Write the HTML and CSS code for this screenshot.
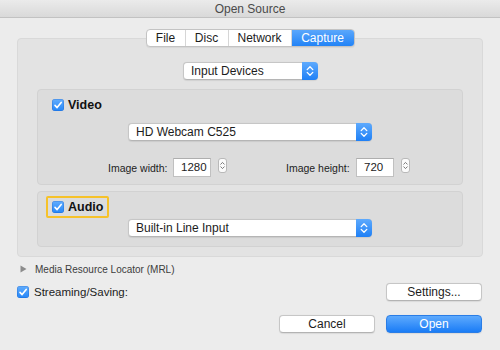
FILE: index.html
```html
<!DOCTYPE html>
<html>
<head>
<meta charset="utf-8">
<link rel="stylesheet" href="styles.css">
</head>
<body>
<div class="window">
  <div class="titlebar">Open Source</div>
  <div class="content">
    <div class="tabs">
      <div class="tab tab-file">File</div>
      <div class="tab tab-disc">Disc</div>
      <div class="tab tab-network">Network</div>
      <div class="tab tab-capture selected">Capture</div>
    </div>
    <div class="panel">
      <div class="popup popup-mode">
        <span class="popup-label">Input Devices</span>
        <span class="popup-arrows"><svg width="16" height="16" viewBox="0 0 16 16"><path d="M5.2 6.6 L8 3.8 L10.8 6.6 M5.2 9.4 L8 12.2 L10.8 9.4" fill="none" stroke="#fff" stroke-width="1.3" stroke-linecap="round" stroke-linejoin="round"/></svg></span>
      </div>
      <div class="group group-video">
        <div class="group-head">
          <span class="check"><svg width="12" height="12" viewBox="0 0 12 12"><path d="M3 6.4 L5.1 8.6 L9.2 3.4" fill="none" stroke="#fff" stroke-width="1.6" stroke-linecap="round" stroke-linejoin="round"/></svg></span>
          <span class="group-title">Video</span>
        </div>
        <div class="popup popup-wide popup-video">
          <span class="popup-label">HD Webcam C525</span>
          <span class="popup-arrows"><svg width="16" height="16" viewBox="0 0 16 16"><path d="M5.2 6.6 L8 3.8 L10.8 6.6 M5.2 9.4 L8 12.2 L10.8 9.4" fill="none" stroke="#fff" stroke-width="1.3" stroke-linecap="round" stroke-linejoin="round"/></svg></span>
        </div>
        <div class="size-row">
          <div class="field field-width">
            <span class="field-label">Image width:</span>
            <span class="field-input">1280</span>
            <span class="stepper"><svg width="8" height="13" viewBox="0 0 8 13"><path d="M2 5 L4 3 L6 5 M2 8 L4 10 L6 8" fill="none" stroke="#666" stroke-width="1" stroke-linecap="round" stroke-linejoin="round"/></svg></span>
          </div>
          <div class="field field-height">
            <span class="field-label">Image height:</span>
            <span class="field-input">720</span>
            <span class="stepper"><svg width="8" height="13" viewBox="0 0 8 13"><path d="M2 5 L4 3 L6 5 M2 8 L4 10 L6 8" fill="none" stroke="#666" stroke-width="1" stroke-linecap="round" stroke-linejoin="round"/></svg></span>
          </div>
        </div>
      </div>
      <div class="group group-audio">
        <div class="group-head focused">
          <span class="check"><svg width="12" height="12" viewBox="0 0 12 12"><path d="M3 6.4 L5.1 8.6 L9.2 3.4" fill="none" stroke="#fff" stroke-width="1.6" stroke-linecap="round" stroke-linejoin="round"/></svg></span>
          <span class="group-title">Audio</span>
        </div>
        <div class="popup popup-wide popup-audio">
          <span class="popup-label">Built-in Line Input</span>
          <span class="popup-arrows"><svg width="16" height="16" viewBox="0 0 16 16"><path d="M5.2 6.6 L8 3.8 L10.8 6.6 M5.2 9.4 L8 12.2 L10.8 9.4" fill="none" stroke="#fff" stroke-width="1.3" stroke-linecap="round" stroke-linejoin="round"/></svg></span>
        </div>
      </div>
    </div>
    <div class="mrl-row">
      <svg class="disclosure" width="7" height="8" viewBox="0 0 7 8"><path d="M0.5 0.5 L6.5 4 L0.5 7.5 Z" fill="#8c8c8c"/></svg>
      <span class="mrl-label">Media Resource Locator (MRL)</span>
    </div>
    <div class="stream-row">
      <span class="check"><svg width="12" height="12" viewBox="0 0 12 12"><path d="M3 6.4 L5.1 8.6 L9.2 3.4" fill="none" stroke="#fff" stroke-width="1.6" stroke-linecap="round" stroke-linejoin="round"/></svg></span>
      <span class="stream-label">Streaming/Saving:</span>
      <span class="spacer"></span>
      <div class="button">Settings...</div>
    </div>
    <div class="action-row">
      <div class="button">Cancel</div>
      <div class="button primary">Open</div>
    </div>
  </div>
</div>
</body>
</html>
```
FILE: styles.css
```css
* { box-sizing: border-box; }
html, body {
  margin: 0;
  padding: 0;
  width: 500px;
  height: 350px;
  overflow: hidden;
  background: #ececec;
  font-family: "Liberation Sans", Arial, sans-serif;
  font-size: 12px;
  color: #1c1c1c;
}
.window {
  width: 500px;
  height: 350px;
  background: #ececec;
}
.titlebar {
  height: 18px;
  line-height: 18px;
  text-align: center;
  font-size: 12px;
  color: #4a4a4a;
  background: linear-gradient(#ebebeb, #d9d9d9);
  border-bottom: 1px solid #c2c2c2;
}
.content {
  padding: 11px 17px 0 17px;
}
.tabs {
  position: relative;
  z-index: 1;
  display: flex;
  width: 209px;
  height: 18px;
  margin: 0 auto -9px auto;
  background: #fff;
  border: 1px solid #c3c3c3;
  border-radius: 4px;
  box-shadow: 0 1px 1px rgba(0,0,0,0.06);
  overflow: hidden;
}
.tab {
  height: 16px;
  line-height: 16px;
  text-align: center;
  font-size: 12px;
  color: #1c1c1c;
  border-right: 1px solid #d6d6d6;
}
.tab-file { width: 39px; }
.tab-disc { width: 43px; }
.tab-network { width: 63px; }
.tab-capture { flex: 1; border-right: none; }
.tab.selected {
  background: linear-gradient(#5aa7fc, #2283f6);
  color: #fff;
}
.panel {
  height: 219px;
  background: #e3e3e3;
  border: 1px solid #d9d9d9;
  border-radius: 4px;
  padding: 23px 19px 0 19px;
  display: flex;
  flex-direction: column;
}
.popup {
  display: flex;
  align-items: stretch;
  height: 18px;
  background: #fff;
  border: 1px solid #c6c6c6;
  border-bottom-color: #b5b5b5;
  border-radius: 4px;
  box-shadow: 0 0.5px 1px rgba(0,0,0,0.08);
}
.popup-label {
  flex: 1;
  padding-left: 7px;
  line-height: 16px;
  font-size: 12px;
  color: #1c1c1c;
}
.popup-arrows {
  width: 16px;
  margin: -1px -1px -1px 0;
  background: linear-gradient(#5eaafd, #1f80f6);
  border-radius: 0 4px 4px 0;
  display: flex;
  align-items: center;
  justify-content: center;
}
.popup-mode {
  width: 135px;
  align-self: center;
  margin-left: 1px;
}
.popup-wide {
  width: 244px;
  align-self: center;
}
.group {
  background: #dcdcdc;
  border: 1px solid #d2d2d2;
  border-radius: 4px;
  display: flex;
  flex-direction: column;
}
.group-video {
  margin-top: 9px;
  height: 96px;
}
.group-audio {
  margin-top: 6px;
  height: 56px;
}
.group-head {
  display: flex;
  align-items: center;
  gap: 4px;
  align-self: flex-start;
  margin: 4px 0 0 8px;
  padding: 3px 4px 3px 4px;
  border: 2px solid transparent;
  border-radius: 2px;
}
.group-head.focused {
  border-color: #f6c22a;
}
.check {
  width: 12px;
  height: 12px;
  border-radius: 3px;
  background: linear-gradient(#62adfd, #2486f8);
  box-shadow: inset 0 0 0 0.5px rgba(0,60,160,0.35);
  display: flex;
  flex: none;
}
.group-title {
  font-weight: bold;
  font-size: 12.5px;
  line-height: 12px;
  color: #111;
}
.popup-video { margin-top: 7px; }
.popup-audio { margin-top: 1px; }
.size-row {
  display: flex;
  gap: 59px;
  margin: 17px 0 0 70px;
}
.field {
  display: flex;
  align-items: center;
}
.field-label {
  font-size: 10.5px;
  color: #1c1c1c;
}
.field-width .field-label { width: 65px; }
.field-height .field-label { width: 70px; }
.field-input {
  width: 38px;
  height: 19px;
  line-height: 17px;
  padding-left: 7px;
  background: #fff;
  border: 1px solid #c0c0c0;
  border-top-color: #aeaeae;
  font-size: 11.5px;
  color: #1c1c1c;
}
.stepper {
  width: 9px;
  height: 15px;
  margin-left: 7px;
  align-self: flex-start;
  background: #fbfbfb;
  border: 1px solid #b9b9b9;
  border-radius: 3px;
  display: flex;
  justify-content: center;
}
.mrl-row {
  display: flex;
  align-items: center;
  height: 14px;
  margin-top: 5px;
  padding-left: 3px;
}
.disclosure { flex: none; }
.mrl-label {
  margin-left: 8px;
  font-size: 10px;
  color: #3c3c3c;
}
.stream-row {
  display: flex;
  align-items: center;
  height: 18px;
  margin-top: 7px;
}
.stream-label {
  margin-left: 5px;
  font-size: 11.5px;
  color: #1c1c1c;
}
.spacer { flex: 1; }
.button {
  width: 96px;
  height: 18px;
  line-height: 16px;
  text-align: center;
  background: #fff;
  border: 1px solid #c6c6c6;
  border-bottom-color: #b3b3b3;
  border-radius: 4px;
  box-shadow: 0 0.5px 1px rgba(0,0,0,0.08);
  font-size: 12px;
  color: #1c1c1c;
}
.stream-row .button { margin-right: 1px; }
.action-row {
  display: flex;
  justify-content: flex-end;
  gap: 11px;
  margin-top: 14px;
  padding-right: 1px;
}
.button.primary {
  background: linear-gradient(#5eaafd, #1a7cf6);
  border-color: #2a7de6;
  color: #fff;
}
```
